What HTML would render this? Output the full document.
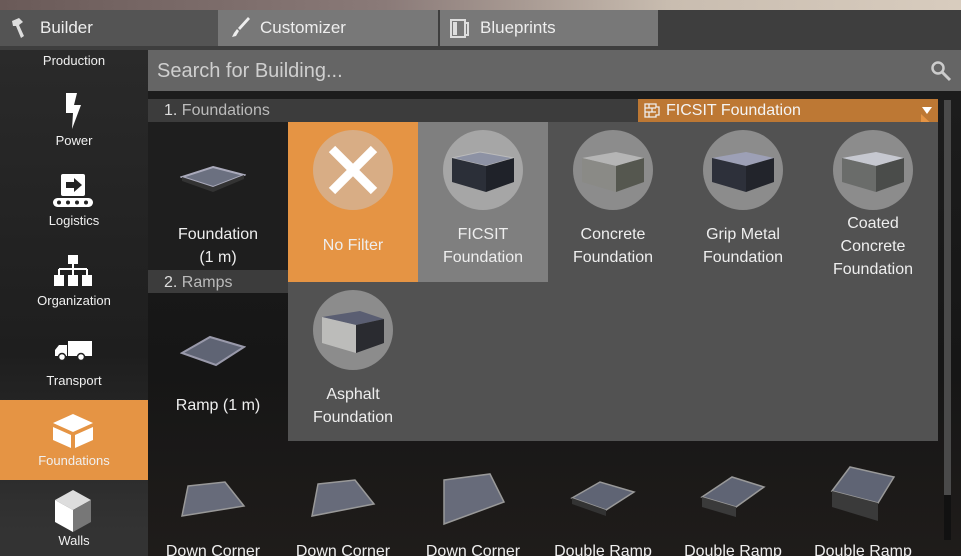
<!DOCTYPE html>
<html><head><meta charset="utf-8"><style>
*{margin:0;padding:0;box-sizing:border-box}
html,body{width:961px;height:556px;overflow:hidden}
body{background:#1a1a1a;font-family:"Liberation Sans",sans-serif;color:#eee;position:relative}
.a{position:absolute}
.circ{position:absolute;width:80px;height:80px;border-radius:50%;background:#8c8c8c}
.lbl{position:absolute;width:130px;text-align:center;font-size:16px;line-height:23px;color:#eee}
.side{position:absolute;left:0;width:148px;text-align:center;font-size:13px;color:#f0f0f0}
</style></head><body>
<div class="a" style="left:0;top:0;width:961px;height:10px;background:linear-gradient(90deg,#6a5a58,#8a7a78 40%,#c9bdb0 70%,#d8ccbe)"></div>
<div class="a" style="left:0;top:10px;width:961px;height:40px;background:#3e3e3e"></div>
<div class="a" style="left:0;top:10px;width:218px;height:36px;background:#545454"></div>
<div class="a" style="left:218px;top:10px;width:220px;height:36px;background:#787878"></div>
<div class="a" style="left:440px;top:10px;width:218px;height:36px;background:#787878"></div>
<svg class="a" style="left:10px;top:17px" width="22" height="22" viewBox="0 0 22 22"><path d="M2 4 L9 1 L13 5 L9 8 L14 19 L11 21 L6 9 L3 9Z" fill="#ddd"/></svg>
<div class="a" style="left:40px;top:18px;font-size:17px">Builder</div>
<svg class="a" style="left:230px;top:16px" width="22" height="24" viewBox="0 0 22 24"><path d="M18 1 L20 3 L10 14 L8 12Z M7 13 L9 15 L6 20 L2 21 L4 17Z" fill="#eee"/></svg>
<div class="a" style="left:260px;top:18px;font-size:17px">Customizer</div>
<svg class="a" style="left:450px;top:18px" width="20" height="20" viewBox="0 0 20 20"><path d="M1 2h14v17H1Z M15 5h3v12h-3" fill="none" stroke="#ddd" stroke-width="2"/><rect x="3" y="4" width="4" height="13" fill="#ddd"/></svg>
<div class="a" style="left:480px;top:18px;font-size:17px">Blueprints</div>

<div class="a" style="left:0;top:50px;width:148px;height:506px;background:linear-gradient(180deg,#2a2a2a,#222 40%,#1e1e1e 60%,#333 95%)"></div>
<div class="side" style="top:53px">Production</div>
<svg class="a" style="left:63px;top:93px" width="20" height="36" viewBox="0 0 20 36"><path d="M3 0 L14 0 L11 12 L18 12 L9 36 L10 20 L3 20Z" fill="#fff"/></svg>
<div class="side" style="top:133px">Power</div>
<svg class="a" style="left:52px;top:174px" width="42" height="34" viewBox="0 0 42 34"><rect x="9" y="0" width="24" height="22" rx="2" fill="#fff"/><path d="M14 8h8v-4l8 7-8 7v-4h-8Z" fill="#222"/><rect x="1" y="24" width="40" height="9" rx="4.5" fill="#fff"/><circle cx="7" cy="28.5" r="2" fill="#222"/><circle cx="16" cy="28.5" r="2" fill="#222"/><circle cx="25" cy="28.5" r="2" fill="#222"/><circle cx="34" cy="28.5" r="2" fill="#222"/></svg>
<div class="side" style="top:213px">Logistics</div>
<svg class="a" style="left:54px;top:255px" width="38" height="32" viewBox="0 0 38 32"><rect x="14" y="0" width="10" height="9" fill="#fff"/><path d="M19 9v5M5 14h28M5 14v6M19 14v6M33 14v6" stroke="#fff" stroke-width="2" fill="none"/><rect x="0" y="20" width="10" height="11" fill="#fff"/><rect x="14" y="20" width="10" height="11" fill="#fff"/><rect x="28" y="20" width="10" height="11" fill="#fff"/></svg>
<div class="side" style="top:293px">Organization</div>
<svg class="a" style="left:55px;top:341px" width="37" height="20" viewBox="0 0 37 20"><rect x="13" y="0" width="24" height="15" fill="#fff"/><path d="M0 9 L4 4 L12 4 L12 15 L0 15Z" fill="#fff"/><circle cx="7" cy="16" r="3.5" fill="#fff" stroke="#222" stroke-width="1.5"/><circle cx="26" cy="16" r="3.5" fill="#fff" stroke="#222" stroke-width="1.5"/></svg>
<div class="side" style="top:373px">Transport</div>
<div class="a" style="left:0;top:400px;width:148px;height:80px;background:#e59444"></div>
<svg class="a" style="left:52px;top:414px" width="42" height="34" viewBox="0 0 42 34"><path d="M21 0 L41 9 L21 18 L1 9Z" fill="#fff"/><path d="M1 13 L19 21 L19 34 L1 26Z M41 13 L23 21 L23 34 L41 26Z" fill="#fff"/></svg>
<div class="side" style="top:453px">Foundations</div>
<svg class="a" style="left:54px;top:490px" width="38" height="42" viewBox="0 0 38 42"><path d="M19 0 L37 10 L19 20 L1 10Z" fill="#ddd"/><path d="M1 10 L19 20 L19 42 L1 32Z" fill="#fff"/><path d="M37 10 L19 20 L19 42 L37 32Z" fill="#777"/></svg>
<div class="side" style="top:533px">Walls</div>

<div class="a" style="left:148px;top:50px;width:813px;height:41px;background:#656565"></div>
<div class="a" style="left:157px;top:60px;font-size:20px;color:#cfcfcf">Search for Building...</div>
<svg class="a" style="left:930px;top:60px" width="22" height="22" viewBox="0 0 22 22"><circle cx="8" cy="8" r="5.5" fill="none" stroke="#ccc" stroke-width="2.5"/><path d="M12 12 L20 20" stroke="#ccc" stroke-width="3"/></svg>

<div class="a" style="left:148px;top:91px;width:813px;height:465px;background:linear-gradient(180deg,#1c1c1c,#161616 60%,#1f1c1a)"></div>
<div class="a" style="left:944px;top:100px;width:7px;height:440px;background:#4a4a4a"></div>
<div class="a" style="left:944px;top:495px;width:7px;height:45px;background:#111"></div>
<div class="a" style="left:148px;top:99px;width:790px;height:23px;background:#3c3c3c"></div>
<div class="a" style="left:164px;top:102px;font-size:16px;color:#bbb"><span style="color:#ddd">1.</span> Foundations</div>
<div class="a" style="left:148px;top:122px;width:140px;height:148px;background:#1e1e1e"></div>
<svg class="a" style="left:180px;top:165px" width="66" height="30" viewBox="0 0 66 30"><path d="M33 2 L64 10 L33 22 L2 12Z" fill="#6b7080" stroke="#aab" stroke-width="2"/><path d="M2 12 L33 22 L33 27 L2 16Z M64 10 L33 22 L33 27 L64 14Z" fill="#333"/></svg>
<div class="lbl" style="left:148px;top:223px;width:140px">Foundation<br>(1 m)</div>
<div class="a" style="left:148px;top:270px;width:140px;height:23px;background:#3c3c3c"></div>
<div class="a" style="left:164px;top:274px;font-size:16px;color:#bbb"><span style="color:#ddd">2.</span> Ramps</div>
<svg class="a" style="left:180px;top:335px" width="66" height="34" viewBox="0 0 66 34"><path d="M30 2 L64 12 L36 30 L2 18Z" fill="#5f6474" stroke="#99a" stroke-width="2"/></svg>
<div class="lbl" style="left:148px;top:394px;width:140px">Ramp (1 m)</div>

<svg class="a" style="left:180px;top:480px" width="66" height="40" viewBox="0 0 66 40"><path d="M8 6 L45 2 L64 26 L2 36Z" fill="#676b7a" stroke="#999" stroke-width="1.5"/></svg>
<svg class="a" style="left:310px;top:478px" width="66" height="42" viewBox="0 0 66 42"><path d="M8 6 L45 2 L64 26 L2 38Z" fill="#676b7a" stroke="#999" stroke-width="1.5"/></svg>
<svg class="a" style="left:440px;top:472px" width="66" height="54" viewBox="0 0 66 54"><path d="M4 8 L50 2 L64 30 L4 52Z" fill="#676b7a" stroke="#999" stroke-width="1.5"/></svg>
<svg class="a" style="left:570px;top:480px" width="66" height="40" viewBox="0 0 66 40"><path d="M2 18 L30 2 L64 12 L36 30Z" fill="#5f6474" stroke="#999" stroke-width="1.5"/><path d="M2 18 L36 30 L36 36 L2 24Z" fill="#333"/></svg>
<svg class="a" style="left:700px;top:475px" width="66" height="50" viewBox="0 0 66 50"><path d="M2 22 L32 2 L64 12 L36 32Z" fill="#5f6474" stroke="#999" stroke-width="1.5"/><path d="M2 22 L36 32 L36 42 L2 32Z" fill="#3a3a3a"/></svg>
<svg class="a" style="left:830px;top:465px" width="66" height="62" viewBox="0 0 66 62"><path d="M2 26 L20 2 L64 12 L48 38Z" fill="#5f6474" stroke="#999" stroke-width="1.5"/><path d="M2 26 L48 38 L48 56 L2 42Z" fill="#3a3a3a"/></svg>
<div class="lbl" style="left:148px;top:540px;width:130px">Down Corner</div>
<div class="lbl" style="left:278px;top:540px">Down Corner</div>
<div class="lbl" style="left:408px;top:540px">Down Corner</div>
<div class="lbl" style="left:538px;top:540px">Double Ramp</div>
<div class="lbl" style="left:668px;top:540px">Double Ramp</div>
<div class="lbl" style="left:798px;top:540px">Double Ramp</div>

<div class="a" style="left:638px;top:99px;width:300px;height:23px;background:#bd7834"></div>
<svg class="a" style="left:644px;top:103px" width="17" height="15" viewBox="0 0 17 15"><path d="M1 1h11v3h3v8h-3v2H1Z M1 5h11 M1 9h11 M5 1v4 M8 5v4 M5 9v5" fill="none" stroke="#eee" stroke-width="1.3"/></svg>
<div class="a" style="left:666px;top:102px;font-size:16px;color:#f4f4f4">FICSIT Foundation</div>
<svg class="a" style="left:920px;top:106px" width="18" height="28" viewBox="0 0 18 28"><path d="M2 1 L12 1 L7 8Z" fill="#fff"/><path d="M1 8 L1 28 L16 22Z" fill="#e59444"/></svg>

<div class="a" style="left:288px;top:122px;width:650px;height:319px;background:#525252"></div>
<div class="a" style="left:288px;top:122px;width:130px;height:160px;background:#e59444"></div>
<div class="a" style="left:418px;top:122px;width:130px;height:160px;background:#7f7f7f"></div>
<div class="circ" style="left:313px;top:130px;background:#d8ad85"></div>
<svg class="a" style="left:326px;top:143px" width="54" height="54" viewBox="0 0 54 54"><path d="M6 6 L48 48 M48 6 L6 48" stroke="#fff" stroke-width="9"/></svg>
<div class="lbl" style="left:288px;top:234px">No Filter</div>
<div class="circ" style="left:443px;top:130px;background:#a6a6a6"></div>
<div class="circ" style="left:573px;top:130px"></div>
<div class="circ" style="left:703px;top:130px"></div>
<div class="circ" style="left:833px;top:130px"></div>
<div class="circ" style="left:313px;top:290px"></div>
<svg class="a" style="left:450px;top:148px" width="66" height="44" viewBox="0 0 66 44"><path d="M2 10 L30 4 L64 10 L36 18Z" fill="#8d92a4" stroke="#bbb"/><path d="M2 10 L36 18 L36 44 L2 34Z" fill="#2b2f38"/><path d="M64 10 L36 18 L36 44 L64 34Z" fill="#1f2229"/></svg>
<svg class="a" style="left:580px;top:148px" width="66" height="44" viewBox="0 0 66 44"><path d="M2 10 L36 4 L64 10 L36 18Z" fill="#b5b5b5"/><path d="M2 10 L36 18 L36 44 L2 34Z" fill="#8a8a86"/><path d="M64 10 L36 18 L36 44 L64 34Z" fill="#55574f"/></svg>
<svg class="a" style="left:710px;top:148px" width="66" height="44" viewBox="0 0 66 44"><path d="M2 10 L36 4 L64 10 L36 18Z" fill="#9da0b6"/><path d="M2 10 L36 18 L36 44 L2 34Z" fill="#2d303a"/><path d="M64 10 L36 18 L36 44 L64 34Z" fill="#22242b"/></svg>
<svg class="a" style="left:840px;top:148px" width="66" height="44" viewBox="0 0 66 44"><path d="M2 10 L36 4 L64 10 L36 18Z" fill="#c6c8d0"/><path d="M2 10 L36 18 L36 44 L2 34Z" fill="#6a6c6a"/><path d="M64 10 L36 18 L36 44 L64 34Z" fill="#4a4c4a"/></svg>
<svg class="a" style="left:320px;top:307px" width="66" height="46" viewBox="0 0 66 46"><path d="M2 10 L40 4 L64 12 L36 18Z" fill="#5a5e72"/><path d="M2 10 L36 18 L36 46 L2 36Z" fill="#bcbcba"/><path d="M64 12 L36 18 L36 46 L64 36Z" fill="#2a2b30"/></svg>
<div class="lbl" style="left:418px;top:223px">FICSIT<br>Foundation</div>
<div class="lbl" style="left:548px;top:223px">Concrete<br>Foundation</div>
<div class="lbl" style="left:678px;top:223px">Grip Metal<br>Foundation</div>
<div class="lbl" style="left:808px;top:212px">Coated<br>Concrete<br>Foundation</div>
<div class="lbl" style="left:288px;top:383px">Asphalt<br>Foundation</div>
</body></html>
